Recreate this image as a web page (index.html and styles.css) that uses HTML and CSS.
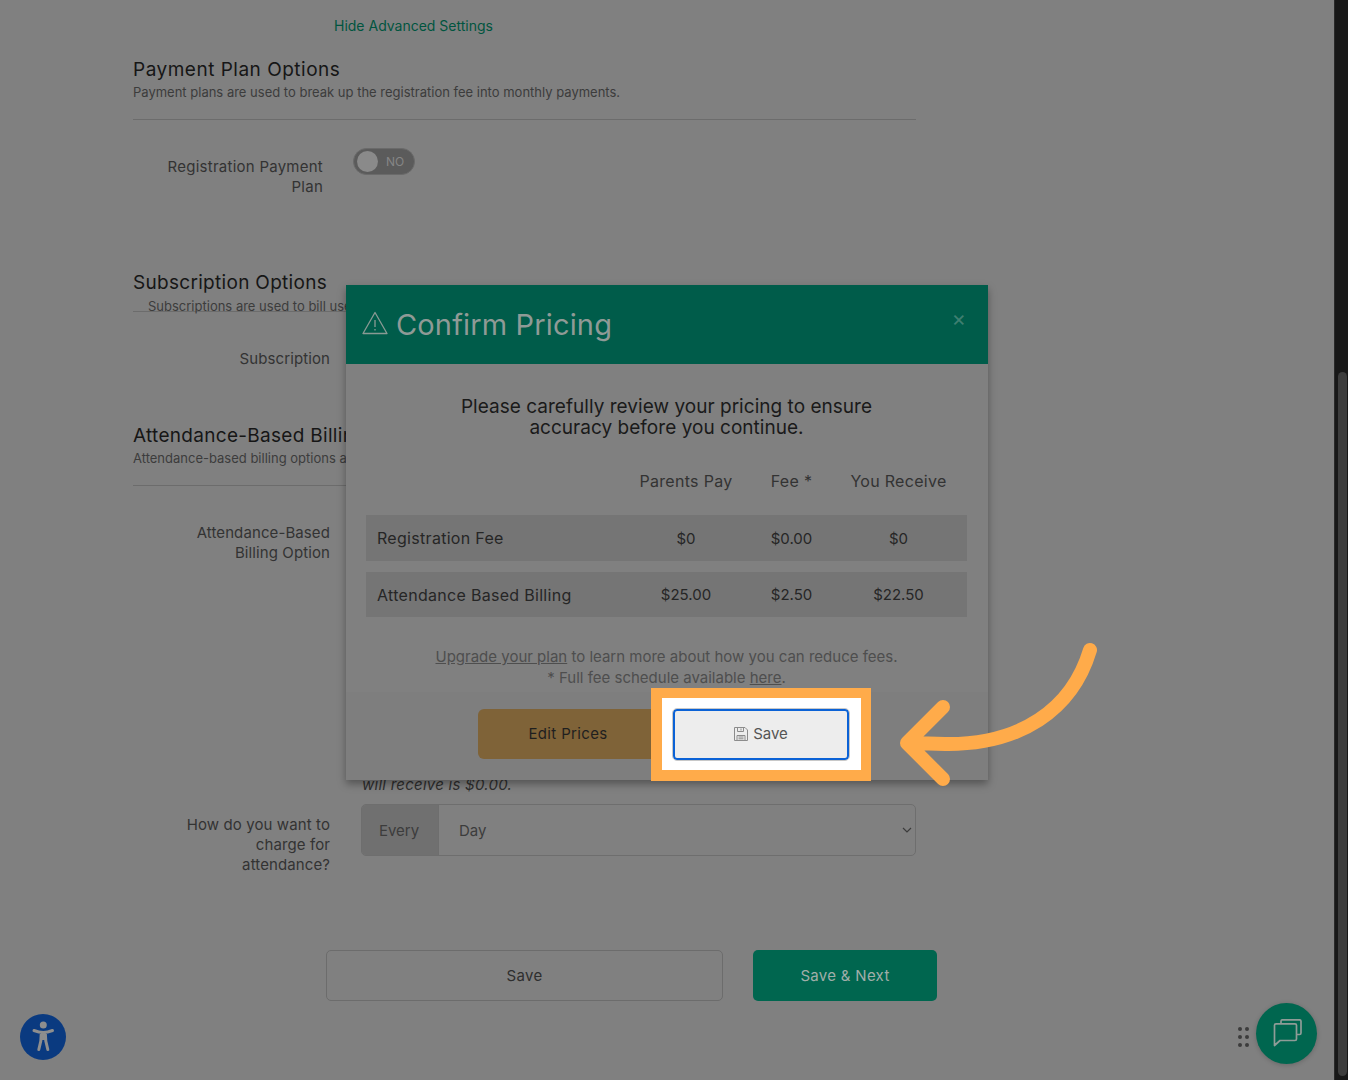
FILE: index.html
```html
<!DOCTYPE html>
<html lang="en">
<head>
<meta charset="utf-8">
<title>Confirm Pricing</title>
<link rel="stylesheet" href="styles.css">
</head>
<body>
<div class="page">
  <main class="form">
    <a class="advanced">Hide Advanced Settings</a>

    <section class="plan">
      <h2>Payment Plan Options</h2>
      <p class="sub">Payment plans are used to break up the registration fee into monthly payments.</p>
      <div class="rule"></div>
      <div class="field plan-field">
        <label class="label narrow">Registration Payment Plan</label>
        <div class="toggle"><span class="knob"></span><span class="toggle-text">NO</span></div>
      </div>
    </section>

    <section class="subscription">
      <h2>Subscription Options</h2>
      <p class="sub indent">Subscriptions are used to bill users on a recurring schedule.</p>
      <div class="rule tight"></div>
      <div class="field sub-field"><label class="label">Subscription</label></div>
    </section>

    <section class="attendance">
      <h2>Attendance-Based Billing</h2>
      <p class="sub">Attendance-based billing options are used to charge for attendance.</p>
      <div class="rule"></div>
      <div class="field billing-field">
        <label class="label wrap">Attendance-Based Billing Option</label>
        <div class="billing-note">will receive is $0.00.</div>
      </div>
      <div class="field charge-field">
        <label class="label wrap">How do you want to charge for attendance?</label>
        <div class="select-group">
          <span class="addon">Every</span>
          <span class="select">Day
            <svg class="chev" width="10" height="6" viewBox="0 0 10 6"><path d="M1 1l4 4 4-4" fill="none" stroke="#3c3c3c" stroke-width="1.2"/></svg>
          </span>
        </div>
      </div>
    </section>

    <div class="actions">
      <button class="btn-outline">Save</button>
      <button class="btn-green">Save &amp; Next</button>
    </div>
  </main>
  <div class="scrollbar"><div class="thumb"></div></div>
</div>

<div class="modal">
  <header class="modal-head">
    <svg class="warn" width="26" height="24" viewBox="0 0 26 24"><path d="M13 1.500L1 22.500h24z" fill="none" stroke="#8a9a94" stroke-width="1.3" stroke-linejoin="round"/><path d="M13 9v7M13 18v1.600" stroke="#8a9a94" stroke-width="1.3"/></svg>
    <h1>Confirm Pricing</h1>
    <span class="close">×</span>
  </header>
  <div class="modal-body">
    <p class="lead">Please carefully review your pricing to ensure accuracy before you continue.</p>
    <div class="price-row head-row"><span></span><span>Parents Pay</span><span>Fee *</span><span>You Receive</span></div>
    <div class="price-row shaded"><span>Registration Fee</span><span>$0</span><span>$0.00</span><span>$0</span></div>
    <div class="price-row shaded"><span>Attendance Based Billing</span><span>$25.00</span><span>$2.50</span><span>$22.50</span></div>
    <p class="note"><u>Upgrade your plan</u> to learn more about how you can reduce fees.<br>* Full fee schedule available <u>here</u>.</p>
  </div>
  <footer class="modal-foot">
    <button class="btn-edit">Edit Prices</button>
  </footer>
</div>

<div class="highlight">
  <button class="btn-save">
    <svg width="14" height="14" viewBox="0 0 14 14"><path d="M.5.5h10.500l2.500 2.500v10.500h-13zM3.500.5v4h6v-4M7 1.500v2M3 13.500v-5h8v5M4.500 10h5M4.500 11.800h5" fill="none" stroke="#8c8c8c" stroke-width="1"/></svg>
    Save
  </button>
</div>

<svg class="arrow" width="220" height="170" viewBox="0 0 220 170">
  <path d="M200 20C182 80 130 115 55 114L22 113M53 77L17 113L53 149" fill="none" stroke="#ffab4a" stroke-width="14" stroke-linecap="round" stroke-linejoin="round"/>
</svg>

<div class="a11y">
  <svg width="30" height="34" viewBox="0 0 30 34"><circle cx="15.300" cy="5" r="3.500" fill="#8e8e8e"/><path d="M12.800 13h5v7h-5z" fill="#8e8e8e"/><path d="M6 10.500Q11 12.500 15.300 12.500Q19.500 12.500 24.500 10.500M13.300 13l-.5 8-2 8.500M17.300 13l.5 8 2 8.500" fill="none" stroke="#8e8e8e" stroke-width="3" stroke-linecap="round" stroke-linejoin="round"/></svg>
</div>

<div class="grip"><i></i><i></i><i></i><i></i><i></i><i></i></div>

<div class="chat">
  <svg width="30" height="30" viewBox="0 0 30 30"><path d="M4 4.800H23Q24.500 4.800 24.500 6.300V20Q24.500 21.500 23 21.500H8L2.500 26.500V6.300Q2.500 4.800 4 4.800ZM9 4.800V2.300Q9 .8 10.500 .8H27.500Q29 .8 29 2.300V14Q29 15.500 27.500 15.500H24.500" fill="none" stroke="#8f9c97" stroke-width="1.700" stroke-linejoin="round"/></svg>
</div>
</body>
</html>
```
FILE: styles.css
```css
* { box-sizing: border-box; }
html, body { margin: 0; height: 1080px; overflow: hidden; }
body { background: #808080; color: #2a2a2a; font-family: Inter, "Open Sans", sans-serif; position: relative; }
button { font-family: inherit; }

.page { display: flex; height: 1080px; }
.form { flex: 1; padding: 17px 0 0 133px; min-width: 0; }
.scrollbar { width: 14px; background: #181818; padding: 372px 1px 4px 3px; border-left: 1px solid #2a2a2a; }
.thumb { height: 704px; background: #3d3d3d; border-radius: 5px; }

.advanced { display: block; margin-left: 201px; height: 18px; font-size: 14px; line-height: 18px; color: #00553f; }
h2 { margin: 0; font-size: 19px; line-height: 24px; font-weight: 400; color: #161616; letter-spacing: .3px; }
.plan h2 { letter-spacing: .5px; }
.sub { margin: 2px 0 0; font-size: 13px; line-height: 16px; color: #3c3c3c; width: 783px; white-space: nowrap; overflow: hidden; }
.sub.indent { padding-left: 15px; margin-top: 3px; }
.rule { width: 783px; height: 1px; background: #6c6c6c; margin-top: 19px; }
.rule.tight { margin-top: -3px; }

.plan { margin-top: 23px; }

.field { display: flex; }
.label { flex: 0 0 197px; text-align: right; font-size: 15px; line-height: 20px; color: #333; letter-spacing: .1px; }
.label.narrow { flex-basis: 190px; padding-left: 24px; letter-spacing: .25px; }
.label.wrap { padding-left: 47px; }

.plan-field { height: 123px; margin-top: 28px; gap: 30px; align-items: flex-start; }
.plan-field .label { margin-top: 9px; }
.toggle { width: 62px; height: 27px; border-radius: 14px; background: #5b5b5b; display: flex; align-items: center; padding-left: 3px; border: 1px solid #6a6a6a; }
.knob { width: 21px; height: 21px; border-radius: 50%; background: #8a8a8a; }
.toggle-text { margin-left: 8px; font-size: 12px; color: #868686; }

.sub-field { height: 112px; padding-top: 37px; }
.billing-field { height: 281px; margin-top: 37px; gap: 32px; }
.billing-note { align-self: flex-end; font-size: 15px; line-height: 20px; font-style: italic; color: #2e2e2e; padding-bottom: 9px; letter-spacing: .25px; }
.charge-field { height: 146px; gap: 31px; padding-top: 11px; }
.select-group { flex: 0 0 555px; height: 52px; margin-top: -11px; display: flex; border: 1px solid #6e6e6e; border-radius: 5px; font-size: 15px; color: #3c3c3c; }
.addon { width: 77px; background: #707070; border-right: 1px solid #6e6e6e; display: flex; align-items: center; justify-content: center; padding-right: 2px; border-radius: 4px 0 0 4px; }
.select { flex: 1; display: flex; align-items: center; justify-content: space-between; padding: 0 3px 0 20px; }

.actions { display: flex; gap: 30px; margin-left: 193px; }
.btn-outline, .btn-green { height: 51px; font-size: 15px; border-radius: 5px; letter-spacing: .3px; }
.btn-outline { width: 397px; background: #808080; border: 1px solid #6c6c6c; color: #2e2e2e; }
.btn-green { width: 184px; background: #00664f; border: 0; color: #a0aea9; }

.modal { position: absolute; left: 346px; top: 285px; width: 642px; height: 495px; background: #808080; box-shadow: 0 4px 8px rgba(0,0,0,.35); display: flex; flex-direction: column; }
.modal-head { height: 79px; background: #005c4a; display: flex; align-items: center; padding: 0 22px 0 16px; gap: 8px; }
.modal-head h1 { margin: 0; flex: 1; font-size: 29px; line-height: 36px; font-weight: 400; color: #8f9a96; letter-spacing: .15px; }
.close { font-size: 22px; color: #3f7f70; margin: 0 0 14px; }
.warn { margin-bottom: 3px; }
.modal-body { flex: 1; padding: 32px 21px 0 20px; }
.lead { margin: 0 auto; width: 470px; text-align: center; font-size: 19px; line-height: 21px; color: #1a1a1a; letter-spacing: .03px; }
.price-row { display: grid; grid-template-columns: 256px 106px 105px 109px; align-items: center; font-size: 16px; letter-spacing: .3px; color: #262626; padding-left: 11px; }
.price-row span + span { text-align: center; }
.head-row { height: 46px; margin-top: 20px; margin-bottom: 11px; color: #333; }
.shaded { height: 46px; margin-bottom: 11px; background: #757575; }
.shaded:last-of-type { height: 45px; }
.shaded span + span { font-size: 15px; letter-spacing: 0; }
.note { margin: 29px 0 0; text-align: center; font-size: 15px; line-height: 21px; color: #4e4e4e; }
.modal-foot { padding: 17px 0 0 132px; background: #7e7e7e; position: absolute; left: 0; right: 0; bottom: 0; height: 88px; }
.btn-edit { width: 180px; height: 50px; padding: 0 0 1px; border: 0; border-radius: 6px; background: #7f6338; color: #1f1f1f; font-size: 15px; letter-spacing: .35px; }

.highlight { position: absolute; left: 651px; top: 688px; width: 220px; height: 93px; background: #fff; border: solid #ffab4a; border-width: 10px 10px 11px 11px; padding: 11px 12px 10px 11px; }
.btn-save { width: 100%; height: 100%; display: flex; align-items: center; justify-content: center; gap: 5px; padding: 0 0 2px; background: #ededed; border: 2px solid #0b62d6; border-radius: 4px; outline: 1px solid #c8c8c8; font-size: 15px; color: #555; }

.arrow { position: absolute; left: 890px; top: 630px; }

.a11y { position: absolute; left: 20px; top: 1014px; width: 46px; height: 46px; border-radius: 50%; background: #0a3a80; display: flex; align-items: center; justify-content: center; }
.grip { position: absolute; left: 1238px; top: 1027px; width: 12px; display: grid; grid-template-columns: 4px 4px; gap: 4px 3px; }
.grip i { width: 4px; height: 4px; border-radius: 50%; background: #3c3c3c; }
.chat { position: absolute; left: 1256px; top: 1003px; width: 61px; height: 61px; border-radius: 50%; background: #00664f; display: flex; align-items: center; justify-content: center; box-shadow: 0 1px 5px rgba(0,0,0,.2); }
```
